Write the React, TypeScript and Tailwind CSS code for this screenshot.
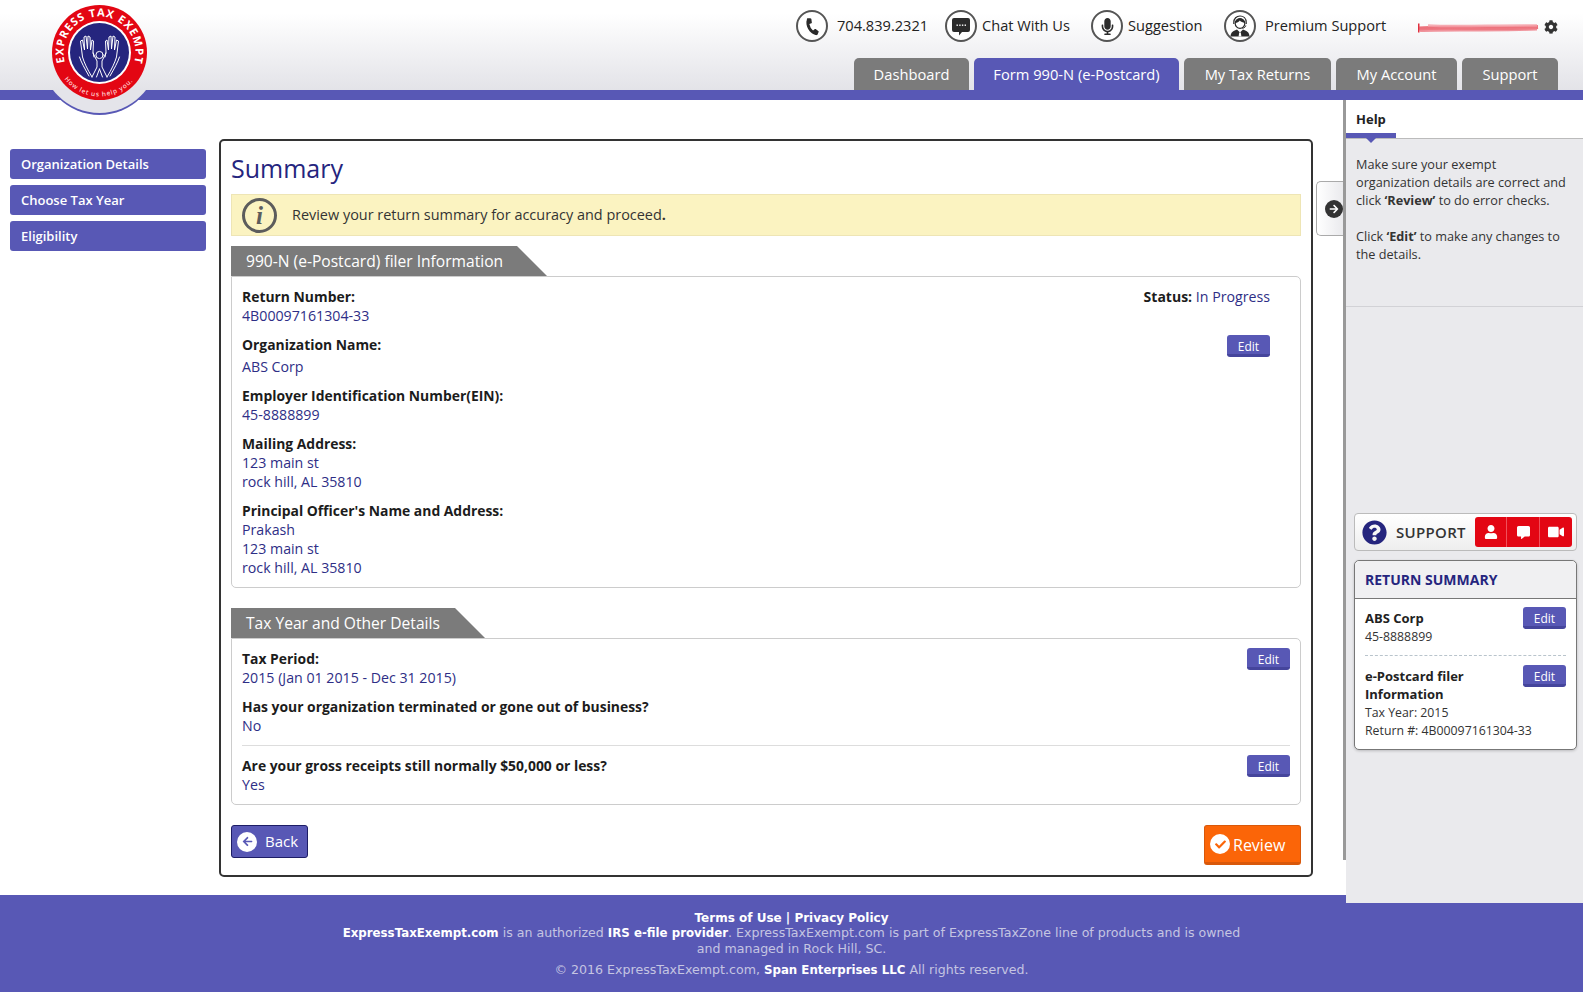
import React from "react";
import { FaPhoneAlt, FaMicrophone, FaUser, FaCommentAlt, FaVideo, FaCog, FaQuestionCircle, FaCheck, FaArrowLeft, FaArrowRight } from "react-icons/fa";

const Circle = ({ children }: { children: React.ReactNode }) => (
  <span className="flex h-[32px] w-[32px] items-center justify-center rounded-full border-2 border-[#555] bg-white text-[#2b2b2b]">{children}</span>
);

const Edit = ({ className = "" }: { className?: string }) => (
  <button className={"flex h-[22px] w-[43px] items-center justify-center rounded-[3px] border-b-[3px] border-[#45459c] bg-[#5858b5] pt-[4px] text-[12px] text-white " + className}>Edit</button>
);

const Logo = () => (
  <svg className="absolute left-[48px] top-[2px] z-20" width="104" height="114" viewBox="48 2 104 114">
    <defs>
      <clipPath id="below"><rect x="40" y="90" width="120" height="30" /></clipPath>
      <path id="topArc" d="M 64.9 62.4 A 36 36 0 1 1 134.1 62.4" />
      <path id="botArc" d="M 64.4 79 A 44 44 0 0 0 134.6 79" />
    </defs>
    <g clipPath="url(#below)">
      <circle cx="99.5" cy="56.5" r="58.5" fill="#5858b5" />
      <circle cx="99.5" cy="54.5" r="58.5" fill="#e4e4ea" />
    </g>
    <circle cx="99.5" cy="52.5" r="47.5" fill="#e30613" />
    <circle cx="99.5" cy="52.5" r="31.5" fill="#fff" />
    <circle cx="99.5" cy="52.5" r="29.5" fill="#25257e" />
    <text fill="#fff" fontFamily="'Open Sans', sans-serif" fontWeight="700" fontSize="11">
      <textPath href="#topArc" textLength="133" lengthAdjust="spacing">EXPRESS TAX EXEMPT</textPath>
    </text>
    <text fill="#ffd0d0" fontFamily="'Open Sans', sans-serif" fontWeight="600" fontSize="6.5">
      <textPath href="#botArc" textLength="78" lengthAdjust="spacing">How let us help you.</textPath>
    </text>
    <g fill="none" stroke="#fff" strokeWidth="1" strokeLinecap="round" strokeLinejoin="round">
      <circle cx="99.5" cy="55" r="3.6" />
      <path d="M93 53 L97 61 L97 67 L92 77 M106 53 L102 61 L102 67 L107 77 M99.5 69 L96.5 77 M99.5 69 L102.5 77" />
      <path d="M92 77 C87 69 84 62 82.5 57 L80.5 41 L82.5 40 L84.5 50 L84 37 L86 36 L87.5 49 L88 36 L90 37 L90.5 50 L92 40 L93.5 41 L93 52 L94 57" />
      <path d="M107 77 C112 69 115 62 116.5 57 L118.5 41 L116.5 40 L114.5 50 L115 37 L113 36 L111.5 49 L111 36 L109 37 L108.5 50 L107 40 L105.5 41 L106 52 L105 57" />
      <path d="M89 76 C85 69 81 62 79.5 57 M110 76 C114 69 118 62 119.5 57" />
    </g>
  </svg>
);

const ChatIcon = () => (
  <svg width="20" height="19" viewBox="0 0 20 19">
    <path d="M3 1h14a2 2 0 0 1 2 2v10a2 2 0 0 1-2 2h-6l-3 3.5V15H3a2 2 0 0 1-2-2V3a2 2 0 0 1 2-2z" fill="#2b2b2b" />
    <g fill="#fff"><rect x="5.5" y="7.5" width="1.4" height="1.4" /><rect x="8.2" y="7.5" width="1.4" height="1.4" /><rect x="10.9" y="7.5" width="1.4" height="1.4" /><rect x="13.6" y="7.5" width="1.4" height="1.4" /></g>
  </svg>
);

const AgentIcon = () => (
  <svg width="22" height="22" viewBox="0 0 22 22">
    <path d="M1.5 21.5c0-4.5 3.5-6 6.5-7l3 3 3-3c3 1 6.5 2.500 6.500 7z" fill="#2b2b2b" />
    <path d="M10.200 17.500h1.600l.6 4h-2.800z" fill="#fff" />
    <circle cx="11" cy="8.500" r="4.800" fill="#fff" stroke="#2b2b2b" strokeWidth="1.200" />
    <path d="M6.200 8c0-3 2-4.600 4.800-4.600S15.800 5 15.800 8c-2-.3-3.800-1-5-2.400C9.800 7 8 7.800 6.200 8z" fill="#2b2b2b" />
    <path d="M4.800 9V7.500C4.800 3.500 7.500 1 11 1s6.200 2.500 6.200 6.500V9" fill="none" stroke="#2b2b2b" strokeWidth="1.200" />
    <path d="M16.800 10.500c0 1.500-1.500 2.500-3.500 2.800" fill="none" stroke="#2b2b2b" strokeWidth="1" />
  </svg>
);

const Scribble = () => (
  <svg className="mt-[12px]" width="121" height="11" viewBox="0 0 121 11">
    <rect x="0" y="1.500" width="1.500" height="9" fill="#e0303f" />
    <g fill="none" className="blur-[0.7px]">
      <path d="M1 6.500 C30 4 70 8 120 5" stroke="#e8505c" strokeWidth="4" opacity="0.8" />
      <path d="M2 8.500 C30 7 80 9 119 7" stroke="#ee7a84" strokeWidth="3" opacity="0.8" />
      <path d="M10 3.500 C40 5 80 3 119 3.500" stroke="#f4a0a8" strokeWidth="2.500" opacity="0.85" />
    </g>
  </svg>
);

const TopLink = ({ icon, label, gap, w }: { icon: React.ReactNode; label: string; gap: string; w: string }) => (
  <div className={"flex items-center " + gap + " " + w}>
    <Circle>{icon}</Circle>
    <span className="pb-[2px] text-[14.6px] text-[#222]">{label}</span>
  </div>
);

const Tab = ({ label, w, active }: { label: string; w: string; active?: boolean }) => (
  <div className={"flex h-[32px] items-center justify-center rounded-t-[5px] text-[14.7px] text-white " + w + " " + (active ? "bg-[#5858b5]" : "bg-[#7b7b7b]")}>{label}</div>
);

const Label = ({ children }: { children: React.ReactNode }) => <div className="text-[13.9px] font-bold text-[#1c1c1c]">{children}</div>;
const Val = ({ children }: { children: React.ReactNode }) => <div className="text-[#2e2e86]">{children}</div>;

const SectionTab = ({ title, w }: { title: string; w: string }) => (
  <div className={"flex h-[30px] items-center bg-[#7b7b7b] pl-[15px] text-[15.6px] text-white [clip-path:polygon(0_0,calc(100%-30px)_0,100%_100%,0_100%)] " + w}>{title}</div>
);

const SideItem = ({ label }: { label: string }) => (
  <div className="flex h-[30px] items-center rounded-[3px] bg-[#5858b5] pl-[11px] text-[13px] font-semibold text-white">{label}</div>
);

export default function App() {
  return (
    <div className="relative min-h-[992px] overflow-hidden bg-white font-['Open_Sans',sans-serif] text-[14.2px] leading-[19px]">
      <Logo />
      <header className="h-[100px] border-b-[10px] border-[#5858b5] bg-[linear-gradient(#ffffff_15%,#e3e3e8)]">
        <div className="flex h-[58px] items-start justify-end pr-[25px] pt-[10px]">
          <TopLink icon={<FaPhoneAlt size={15} className="rotate-[15deg]" />} label="704.839.2321" gap="gap-[9px]" w="w-[149px]" />
          <TopLink icon={<ChatIcon />} label="Chat With Us" gap="gap-[5px]" w="w-[146px]" />
          <TopLink icon={<FaMicrophone size={17} />} label="Suggestion" gap="gap-[5px]" w="w-[133px]" />
          <TopLink icon={<AgentIcon />} label="Premium Support" gap="gap-[9px]" w="w-[194px]" />
          <Scribble />
          <FaCog size={14} className="ml-[5px] mt-[10px] text-[#333]" />
        </div>
        <nav className="flex justify-end gap-[5px] pr-[25px]">
          <Tab label="Dashboard" w="w-[115px]" />
          <Tab label="Form 990-N (e-Postcard)" w="w-[205px]" active />
          <Tab label="My Tax Returns" w="w-[147px]" />
          <Tab label="My Account" w="w-[121px]" />
          <Tab label="Support" w="w-[96px]" />
        </nav>
      </header>

      <div className="relative flex h-[795px] items-start">
        <aside className="flex w-[219px] flex-col gap-[6px] pl-[10px] pr-[13px] pt-[49px]">
          <SideItem label="Organization Details" />
          <SideItem label="Choose Tax Year" />
          <SideItem label="Eligibility" />
        </aside>

        <main className="mt-[39px] flex h-[738px] w-[1094px] flex-col rounded-[5px] border-2 border-[#333] px-[10px]">
          <h1 className="mt-[11px] text-[25px] leading-[32px] text-[#25257e]">Summary</h1>
          <div className="mt-[10px] flex h-[42px] items-center border border-[#eee5b5] bg-[#fbf3c1] pl-[10px]">
            <span className="flex h-[35px] w-[35px] items-center justify-center rounded-full border-[3px] border-[#5c5c5c] font-['Liberation_Serif',serif] text-[25px] font-bold italic leading-none text-[#5c5c5c]">i</span>
            <span className="ml-[15px] pb-[2px] text-[14.45px] text-[#333]">Review your return summary for accuracy and proceed<span className="font-bold">.</span></span>
          </div>

          <div className="mt-[10px]"><SectionTab title="990-N (e-Postcard) filer Information" w="w-[316px]" /></div>
          <div className="relative h-[312px] rounded-b-[5px] rounded-tr-[5px] border border-[#ccc] pl-[10px] pt-[10px]">
            <div className="absolute right-[30px] top-[10px]"><span className="text-[14px] font-bold text-[#1c1c1c]">Status:</span> <span className="text-[#2e2e86]">In Progress</span></div>
            <Edit className="absolute right-[30px] top-[58px]" />
            <Label>Return Number:</Label>
            <Val>4B00097161304-33</Val>
            <div className="mt-[10px]"><Label>Organization Name:</Label></div>
            <div className="mt-[3px]"><Val>ABS Corp</Val></div>
            <div className="mt-[10px]"><Label>Employer Identification Number(EIN):</Label></div>
            <Val>45-8888899</Val>
            <div className="mt-[10px]"><Label>Mailing Address:</Label></div>
            <Val>123 main st</Val>
            <Val>rock hill, AL 35810</Val>
            <div className="mt-[10px]"><Label>Principal Officer's Name and Address:</Label></div>
            <Val>Prakash</Val>
            <Val>123 main st</Val>
            <Val>rock hill, AL 35810</Val>
          </div>

          <div className="mt-[20px]"><SectionTab title="Tax Year and Other Details" w="w-[254px]" /></div>
          <div className="relative h-[167px] rounded-b-[5px] rounded-tr-[5px] border border-[#ccc] px-[10px] pt-[10px]">
            <Edit className="absolute right-[10px] top-[9px]" />
            <Edit className="absolute right-[10px] top-[116px]" />
            <Label>Tax Period:</Label>
            <Val>2015 (Jan 01 2015 - Dec 31 2015)</Val>
            <div className="mt-[10px]"><Label>Has your organization terminated or gone out of business?</Label></div>
            <Val>No</Val>
            <div className="mt-[10px] border-t border-[#ddd] pt-[10px]"><Label>Are your gross receipts still normally $50,000 or less?</Label></div>
            <Val>Yes</Val>
          </div>

          <div className="mt-[20px] flex items-start justify-between">
            <button className="flex h-[33px] w-[77px] items-center rounded-[3px] border border-[#1d1d66] bg-[#5858b5] pl-[5px] text-[15px] text-white">
              <span className="flex h-[20px] w-[20px] items-center justify-center rounded-full bg-white text-[#5858b5]"><FaArrowLeft size={11} /></span>
              <span className="ml-[8px]">Back</span>
            </button>
            <button className="flex h-[40px] w-[97px] items-center rounded-[3px] border border-b-[3px] border-[#d9580a] bg-[#fb6508] pl-[5px] text-[16px] text-white">
              <span className="flex h-[20px] w-[20px] items-center justify-center rounded-full bg-white text-[#fb6508]"><FaCheck size={11} /></span>
              <span className="ml-[3px] pt-[2px]">Review</span>
            </button>
          </div>
        </main>

        <div className="ml-[30px] h-[760px] w-[3px] bg-[#999]" />

        <div className="absolute left-[1316px] top-[81px] z-10 flex h-[55px] w-[27px] items-center rounded-l-[5px] border border-r-0 border-[#aaa] bg-[linear-gradient(90deg,#fff,#eaeaed)] pl-[8px]">
          <span className="flex h-[18px] w-[18px] items-center justify-center rounded-full bg-[#333] text-white"><FaArrowRight size={10} /></span>
        </div>

        <aside className="relative z-10 flex h-[803px] w-[237px] flex-col bg-[#eaeaed] text-[12.7px] leading-[18px] text-[#333]">
          <div className="relative h-[39px] border-b border-[#bbb] bg-white">
            <div className="h-[38px] w-[50px] border-b-[5px] border-[#5858b5] pl-[10px] pt-[10px] text-[13px] font-bold text-[#222]">Help</div>
            <div className="absolute left-[20px] top-[38px] h-0 w-0 border-x-[5px] border-t-[5px] border-x-transparent border-t-[#5858b5]" />
          </div>
          <div className="h-[168px] border-b border-[#d2d2d6] pl-[10px] pr-[10px] pt-[16px]">
            <p>Make sure your exempt organization details are correct and click <b>‘Review’</b> to do error checks.</p>
            <p className="mt-[18px]">Click <b>‘Edit’</b> to make any changes to the details.</p>
          </div>

          <div className="ml-[8px] mt-[206px] flex h-[38px] w-[223px] items-center rounded-[4px] border border-[#bbb] bg-[linear-gradient(#fff,#eee)] pl-[7px]">
            <FaQuestionCircle size={25} className="text-[#25257e]" />
            <span className="ml-[9px] text-[15px] font-semibold tracking-[0.3px] text-[#333]">SUPPORT</span>
            <div className="ml-[9px] flex h-[30px] w-[97px] rounded-[3px] bg-[#e30613] text-white">
              <span className="flex flex-1 items-center justify-center border-r border-[#f0505a]"><FaUser size={14} /></span>
              <span className="flex flex-1 items-center justify-center border-r border-[#f0505a]"><FaCommentAlt size={13} /></span>
              <span className="flex flex-1 items-center justify-center"><FaVideo size={16} /></span>
            </div>
          </div>

          <div className="relative ml-[8px] mt-[9px] h-[190px] w-[223px] rounded-[5px] border border-[#777] bg-white shadow-[0_1px_3px_rgba(0,0,0,0.2)]">
            <div className="flex h-[38px] items-center rounded-t-[5px] border-b border-[#777] bg-[#f0f0f2] pl-[10px] text-[14px] font-bold text-[#25257e]">RETURN SUMMARY</div>
            <div className="relative mx-[10px] h-[57px] border-b border-dashed border-[#b9c4cc] pt-[10px] text-[12.3px]">
              <Edit className="absolute right-0 top-[8px]" />
              <div className="text-[13px] font-bold text-[#222]">ABS Corp</div>
              <div className="pt-[1px]">45-8888899</div>
            </div>
            <div className="relative mx-[10px] pt-[11px] text-[12.3px]">
              <Edit className="absolute right-0 top-[9px]" />
              <div className="w-[140px] text-[13px] font-bold text-[#222]">e-Postcard filer Information</div>
              <div className="pt-[1px]">Tax Year: 2015</div>
              <div>Return #: 4B00097161304-33</div>
            </div>
          </div>
        </aside>
      </div>

      <footer className="h-[97px] bg-[#5858b5] pt-[16px] text-center font-['DejaVu_Sans',sans-serif] text-[12.6px] leading-[15.5px] text-[#c5c5e2]">
        <div className="text-[12px] font-bold text-white">Terms of Use | Privacy Policy</div>
        <div className="mx-auto -mt-[2px] w-[925px]"><b className="text-[11.8px] text-white">ExpressTaxExempt.com</b> is an authorized <b className="text-[11.8px] text-white">IRS e-file provider</b>. ExpressTaxExempt.com is part of ExpressTaxZone line of products and is owned and managed in Rock Hill, SC.</div>
        <div className="mt-[5px]">© 2016 ExpressTaxExempt.com, <b className="text-[11.8px] text-white">Span Enterprises LLC</b> All rights reserved.</div>
      </footer>
    </div>
  );
}
